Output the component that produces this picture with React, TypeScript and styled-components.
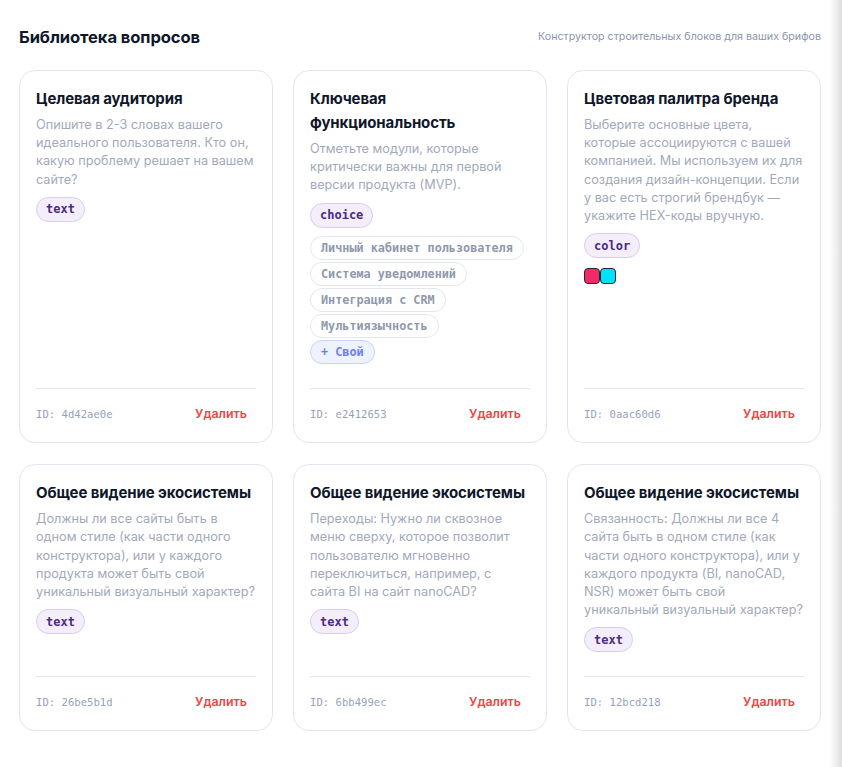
import React from "react";
import styled, { createGlobalStyle } from "styled-components";

const Global = createGlobalStyle`
  html, body { margin: 0; padding: 0; background: #ffffff; }
  body { font-family: Inter, "Noto Sans", sans-serif; -webkit-font-smoothing: antialiased; }
  * { box-sizing: border-box; }
`;

const Shell = styled.div`
  display: flex;
  min-height: 100vh;
`;

const Main = styled.main`
  flex: 1;
  padding: 25px 0 30px 19px;
`;

const EdgeShade = styled.div`
  width: 13px;
  flex: none;
  background: linear-gradient(to right, rgba(0, 0, 0, 0) 0%, rgba(0, 0, 0, 0.05) 45%, rgba(0, 0, 0, 0.13) 100%);
`;

const Header = styled.header`
  width: 802px;
  display: flex;
  align-items: center;
  justify-content: space-between;
  margin-bottom: 21px;
`;

const PageTitle = styled.h1`
  margin: 0;
  font-size: 16.6px;
  line-height: 24px;
  font-weight: 700;
  color: #0f172a;
  letter-spacing: -0.1px;
`;

const Subtitle = styled.span`
  font-size: 10.7px;
  line-height: 16px;
  color: #8b95ad;
`;

const Grid = styled.div`
  display: grid;
  grid-template-columns: repeat(3, 254px);
  gap: 21px 20px;
  align-items: stretch;
`;

const Card = styled.article`
  display: flex;
  flex-direction: column;
  background: #ffffff;
  border: 1px solid #e2e7ef;
  border-radius: 16px;
  padding: 16px 16px 15px;
`;

const Body = styled.div`
  flex: 1;
  display: flex;
  flex-direction: column;
  align-items: flex-start;
`;

const CardTitle = styled.h2`
  margin: 0;
  font-size: 15px;
  line-height: 24px;
  font-weight: 700;
  color: #0f172a;
  letter-spacing: -0.1px;
`;

const Description = styled.p`
  margin: 5px 0 0;
  max-width: 219px;
  font-size: 12.7px;
  line-height: 18.2px;
  color: #a2a9ba;
`;

const TypeTag = styled.span`
  display: inline-flex;
  align-items: center;
  height: 25px;
  margin-top: 8px;
  padding: 0 9px;
  border-radius: 13px;
  background: #f4eefb;
  border: 1px solid #dacbef;
  color: #4c2a85;
  font-family: "DejaVu Sans Mono", "Liberation Mono", monospace;
  font-weight: 700;
  font-size: 12px;
`;

const Options = styled.div`
  display: flex;
  flex-direction: column;
  align-items: flex-start;
  gap: 1.5px;
  margin-top: 8px;
`;

const Chip = styled.span<{ $accent?: boolean }>`
  display: inline-flex;
  align-items: center;
  height: 24.5px;
  padding: 0 10px;
  border-radius: 13px;
  background: ${(p) => (p.$accent ? "#eef2ff" : "#ffffff")};
  border: 1px solid ${(p) => (p.$accent ? "#c9d4fb" : "#e2e7ef")};
  color: ${(p) => (p.$accent ? "#6a80ee" : "#8f98ac")};
  font-family: "DejaVu Sans Mono", "Liberation Mono", monospace;
  font-weight: 700;
  font-size: 11.8px;
  white-space: nowrap;
`;

const Swatches = styled.div`
  display: flex;
  margin-top: 10px;
`;

const Swatch = styled.span<{ $color: string }>`
  width: 16px;
  height: 16px;
  border-radius: 4px;
  border: 1.5px solid #27272a;
  background: ${(p) => p.$color};
`;

const Footer = styled.footer`
  margin-top: 24px;
  padding-top: 12px;
  border-top: 1px solid #e2e7ef;
  display: flex;
  align-items: center;
  justify-content: space-between;
`;

const IdLabel = styled.span`
  font-family: "DejaVu Sans Mono", "Liberation Mono", monospace;
  font-size: 10.6px;
  color: #97a2ba;
`;

const DeleteButton = styled.button`
  border: none;
  background: transparent;
  padding: 5px 9px 5px 8px;
  font-family: Inter, "Noto Sans", sans-serif;
  font-size: 12.4px;
  line-height: 16px;
  font-weight: 600;
  color: #ef4444;
  cursor: pointer;
`;

type Question = {
  id: string;
  title: string;
  description: string;
  type: string;
  options?: string[];
  colors?: string[];
};

const questions: Question[] = [
  {
    id: "4d42ae0e",
    title: "Целевая аудитория",
    description:
      "Опишите в 2-3 словах вашего идеального пользователя. Кто он, какую проблему решает на вашем сайте?",
    type: "text",
  },
  {
    id: "e2412653",
    title: "Ключевая функциональность",
    description: "Отметьте модули, которые критически важны для первой версии продукта (MVP).",
    type: "choice",
    options: ["Личный кабинет пользователя", "Система уведомлений", "Интеграция с CRM", "Мультиязычность"],
  },
  {
    id: "0aac60d6",
    title: "Цветовая палитра бренда",
    description:
      "Выберите основные цвета, которые ассоциируются с вашей компанией. Мы используем их для создания дизайн-концепции. Если у вас есть строгий брендбук — укажите HEX-коды вручную.",
    type: "color",
    colors: ["#f22b68", "#00e1fb"],
  },
  {
    id: "26be5b1d",
    title: "Общее видение экосистемы",
    description:
      "Должны ли все сайты быть в одном стиле (как части одного конструктора), или у каждого продукта может быть свой уникальный визуальный характер?",
    type: "text",
  },
  {
    id: "6bb499ec",
    title: "Общее видение экосистемы",
    description:
      "Переходы: Нужно ли сквозное меню сверху, которое позволит пользователю мгновенно переключиться, например, с сайта BI на сайт nanoCAD?",
    type: "text",
  },
  {
    id: "12bcd218",
    title: "Общее видение экосистемы",
    description:
      "Связанность: Должны ли все 4 сайта быть в одном стиле (как части одного конструктора), или у каждого продукта (BI, nanoCAD, NSR) может быть свой уникальный визуальный характер?",
    type: "text",
  },
];

const QuestionCard: React.FC<{ q: Question }> = ({ q }) => (
  <Card>
    <Body>
      <CardTitle>{q.title}</CardTitle>
      <Description>{q.description}</Description>
      <TypeTag>{q.type}</TypeTag>
      {q.options && (
        <Options>
          {q.options.map((o) => (
            <Chip key={o}>{o}</Chip>
          ))}
          <Chip $accent>+ Свой</Chip>
        </Options>
      )}
      {q.colors && (
        <Swatches>
          {q.colors.map((c) => (
            <Swatch key={c} $color={c} />
          ))}
        </Swatches>
      )}
    </Body>
    <Footer>
      <IdLabel>ID: {q.id}</IdLabel>
      <DeleteButton type="button">Удалить</DeleteButton>
    </Footer>
  </Card>
);

export default function App() {
  return (
    <Shell>
      <Global />
      <Main>
        <Header>
          <PageTitle>Библиотека вопросов</PageTitle>
          <Subtitle>Конструктор строительных блоков для ваших брифов</Subtitle>
        </Header>
        <Grid>
          {questions.map((q) => (
            <QuestionCard key={q.id} q={q} />
          ))}
        </Grid>
      </Main>
      <EdgeShade />
    </Shell>
  );
}
